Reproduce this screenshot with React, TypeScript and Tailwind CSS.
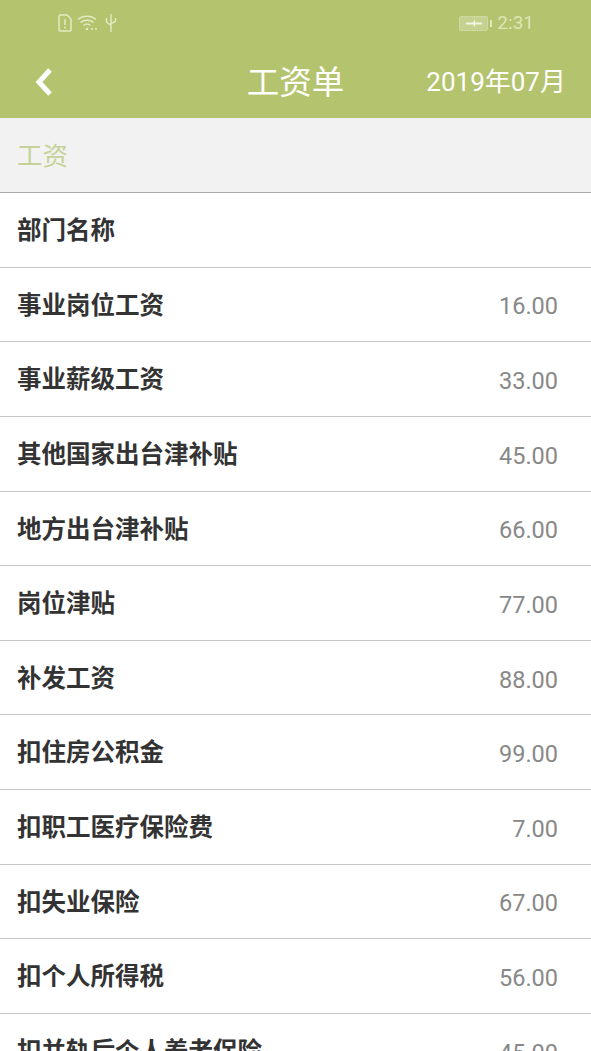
import React from 'react';

const rows = [
  { label: '部门名称', value: '' },
  { label: '事业岗位工资', value: '16.00' },
  { label: '事业薪级工资', value: '33.00' },
  { label: '其他国家出台津补贴', value: '45.00' },
  { label: '地方出台津补贴', value: '66.00' },
  { label: '岗位津贴', value: '77.00' },
  { label: '补发工资', value: '88.00' },
  { label: '扣住房公积金', value: '99.00' },
  { label: '扣职工医疗保险费', value: '7.00' },
  { label: '扣失业保险', value: '67.00' },
  { label: '扣个人所得税', value: '56.00' },
  { label: '扣并轨后个人养老保险', value: '45.00' },
];

const font = "font-['Roboto','Noto_Sans_CJK_SC',sans-serif]";

function StatusIcons() {
  return (
    <div className="flex items-center text-[#e3ebc4]">
      {/* sim */}
      <svg width="15" height="18" viewBox="0 0 15 18" fill="none" stroke="currentColor" strokeWidth="1.5">
        <path d="M1 2a1 1 0 0 1 1-1h7l4 4v11a1 1 0 0 1-1 1H2a1 1 0 0 1-1-1z" />
        <path d="M7 5v6M7 12.500v2" />
      </svg>
      {/* wifi */}
      <svg width="21" height="18" viewBox="0 0 21 18" fill="none" stroke="currentColor" strokeWidth="1.5" className="ml-[4px]">
        <path d="M1 5.500c5-4.400 13-4.400 18 0M3.500 8.500c3.500-3 9.500-3 13 0M6.500 11.500c2-1.600 5-1.600 7 0" />
        <circle cx="10" cy="15" r="1.300" fill="currentColor" stroke="none" />
        <circle cx="15" cy="15" r="1.100" fill="currentColor" stroke="none" />
        <circle cx="19" cy="15" r="1.100" fill="currentColor" stroke="none" />
      </svg>
      {/* usb */}
      <svg width="12" height="20" viewBox="0 0 12 20" fill="none" stroke="currentColor" strokeWidth="1.4" className="ml-[7px]">
        <path d="M6 1v18M1.500 5v3.500c0 1.500 1 2 4.500 3.500M10.500 5v2.500c0 1.200-1 1.800-4.500 3" />
      </svg>
    </div>
  );
}

function Battery() {
  return (
    <div className="flex items-center gap-[2px]">
      <div className="w-[29px] h-[15px] rounded-[2px] border border-[#cdd9a0] bg-[#c5d28f] flex items-center justify-center">
        <svg width="18" height="9" viewBox="0 0 18 9" fill="#f2f6e0">
          <path d="M1 3.500h7l2-3v3h7v2h-7v3l-2-3H1z" />
        </svg>
      </div>
      <div className="w-[2px] h-[7px] bg-[#dfe8bd]" />
    </div>
  );
}

export default function App() {
  return (
    <div className={`w-[591px] h-[1051px] overflow-hidden bg-white ${font}`}>
      <div className="h-[118px] bg-[#b4c36d] flex flex-col">
        <div className="h-[45px] pl-[58px] pr-[57px] pt-[1px] flex items-center justify-between">
          <StatusIcons />
          <div className="flex items-center gap-[5px]">
            <Battery />
            <span className="text-[19px] text-[#dde6b8]">2:31</span>
          </div>
        </div>
        <div className="flex-1 grid grid-cols-[1fr_auto_1fr] items-center pl-[25px] pr-[25px] pt-[2px]">
          <svg width="24" height="30" viewBox="0 0 24 30" fill="none" stroke="white" strokeWidth="5" className="ml-[7px] mb-[2px]">
            <path d="M18 3 L7 15 L18 27" />
          </svg>
          <span className="text-[32.500px] leading-[44px] text-white">工资单</span>
          <span className="justify-self-end text-[26px] text-white">2019年07月</span>
        </div>
      </div>
      <div className="h-[75px] pt-[3px] bg-[#f2f2f2] border-b border-[#a8a8a8] flex items-center px-[17px]">
        <span className="text-[25.500px] text-[#c5d196]">工资</span>
      </div>
      {rows.map((row) => (
        <div key={row.label} className="h-[74.650px] pt-[3px] shrink-0 border-b border-[#c4c4c4] flex items-center justify-between pl-[17px] pr-[33px]">
          <span className="text-[24.500px] font-bold text-[#333333]">{row.label}</span>
          <span className="pt-[2px] text-[23.500px] text-[#888888]">{row.value}</span>
        </div>
      ))}
    </div>
  );
}
